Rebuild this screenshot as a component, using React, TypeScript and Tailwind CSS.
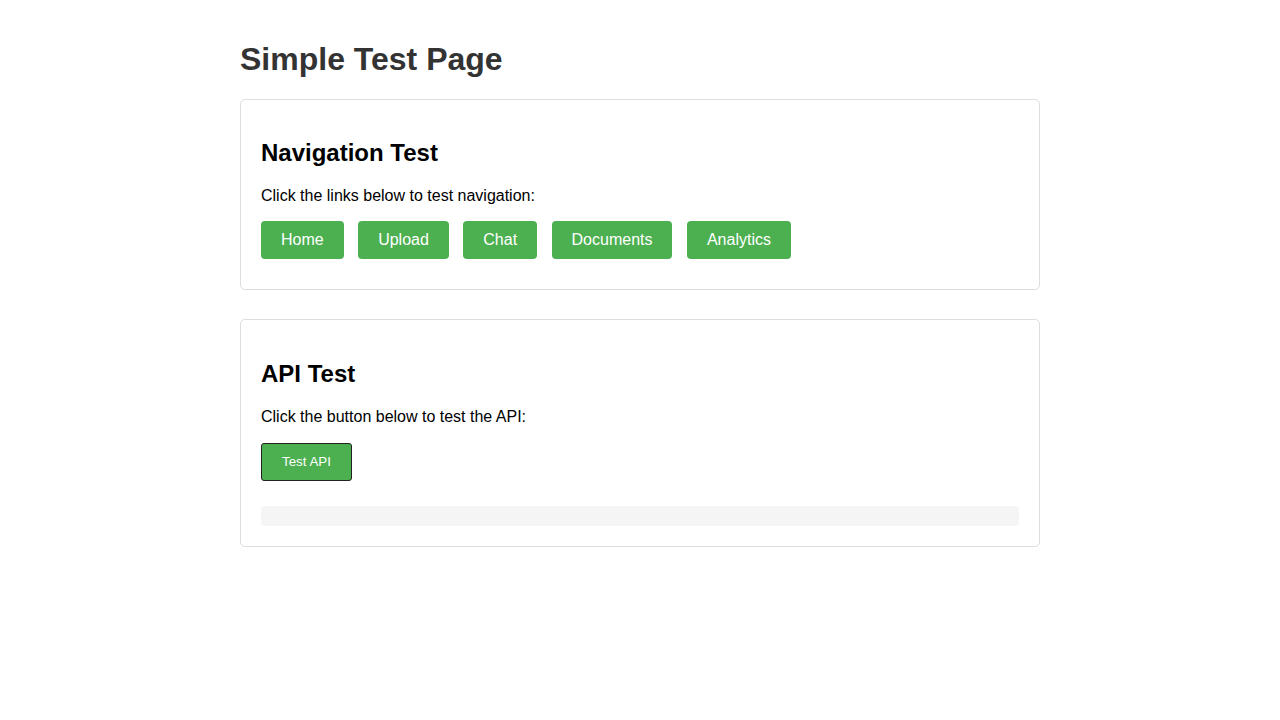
import React, { useState } from 'react';

const links = ['Home', 'Upload', 'Chat', 'Documents', 'Analytics'];

export default function App() {
  const [result, setResult] = useState('');

  return (
    <div className="min-h-screen bg-white p-5 font-['Liberation_Sans',Arial,sans-serif] text-black">
      <div className="max-w-[800px] mx-auto">
        <h1 className="text-[32px] leading-[36.8px] font-bold text-[#333] mt-[21.44px] mb-[20.4px]">
          Simple Test Page
        </h1>

        {/* Navegação */}
        <div className="border border-[#ddd] rounded-[5px] p-5 mb-[29px]">
          <h2 className="text-[24px] leading-[27.6px] font-bold mt-[19px] mb-[20.5px]">
            Navigation Test
          </h2>
          <p className="text-[16px] leading-[18.4px] mb-[15.4px]">
            Click the links below to test navigation:
          </p>
          <div className="text-[16px] leading-[18.4px]">
            {links.map((l) => (
              <React.Fragment key={l}>
                <a
                  href="#"
                  className="inline-block px-5 py-[10px] mr-[10px] mb-[10px] bg-[#4CAF50] text-white rounded-[4px] no-underline"
                >
                  {l}
                </a>{' '}
              </React.Fragment>
            ))}
          </div>
        </div>

        {/* API */}
        <div className="border border-[#ddd] rounded-[5px] px-5 pt-5 pb-5">
          <h2 className="text-[24px] leading-[27.6px] font-bold mt-[19.92px] mb-[20.6px]">
            API Test
          </h2>
          <p className="text-[16px] leading-[18.4px] mb-[17px]">
            Click the button below to test the API:
          </p>
          <button
            type="button"
            onClick={() => setResult('')}
            className="block px-5 py-[10px] text-[13.33px] leading-[16px] bg-[#4CAF50] text-white border border-[#222] rounded-[3px]"
          >
            Test API
          </button>
          <div className="mt-[25px] p-[10px] bg-[#f5f5f5] rounded-[4px] text-sm">
            {result}
          </div>
        </div>
      </div>
    </div>
  );
}
